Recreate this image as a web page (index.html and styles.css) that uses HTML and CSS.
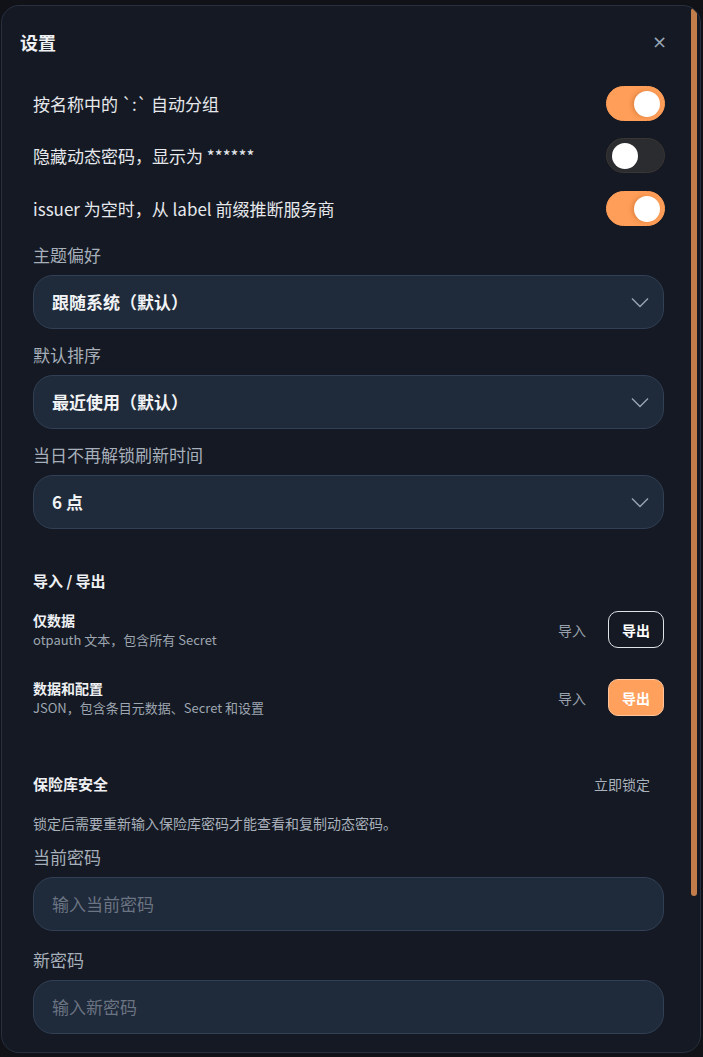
FILE: index.html
```html
<!DOCTYPE html>
<html lang="zh-CN">
<head>
    <meta charset="UTF-8">
    <meta name="viewport" content="width=device-width, initial-scale=1.0">
    <title>设置</title>
    <link rel="stylesheet" href="styles.css">
</head>
<body>
    <div class="dialog">
        <div class="dialog-header">
            <h1>设置</h1>
            <button type="button" class="close-btn">×</button>
        </div>

        <div class="dialog-body">
            <div class="toggle-row">
                <span>按名称中的 `:` 自动分组</span>
                <label class="switch on"><input type="checkbox" checked><span class="knob"></span></label>
            </div>
            <div class="toggle-row">
                <span>隐藏动态密码，显示为 ******</span>
                <label class="switch"><input type="checkbox"><span class="knob"></span></label>
            </div>
            <div class="toggle-row">
                <span>issuer 为空时，从 label 前缀推断服务商</span>
                <label class="switch on"><input type="checkbox" checked><span class="knob"></span></label>
            </div>

            <div class="field first">
                <label>主题偏好</label>
                <div class="select">
                    <span>跟随系统（默认）</span>
                    <svg width="18" height="11" viewBox="0 0 18 11"><path d="M1 1.5 L9 9.5 L17 1.5" fill="none" stroke="#9aa5b4" stroke-width="1.4"/></svg>
                </div>
            </div>
            <div class="field">
                <label>默认排序</label>
                <div class="select">
                    <span>最近使用（默认）</span>
                    <svg width="18" height="11" viewBox="0 0 18 11"><path d="M1 1.5 L9 9.5 L17 1.5" fill="none" stroke="#9aa5b4" stroke-width="1.4"/></svg>
                </div>
            </div>
            <div class="field">
                <label>当日不再解锁刷新时间</label>
                <div class="select">
                    <span>6 点</span>
                    <svg width="18" height="11" viewBox="0 0 18 11"><path d="M1 1.5 L9 9.5 L17 1.5" fill="none" stroke="#9aa5b4" stroke-width="1.4"/></svg>
                </div>
            </div>

            <h2 class="section-title io-title">导入 / 导出</h2>
            <div class="io-row">
                <div class="io-text">
                    <strong>仅数据</strong>
                    <span>otpauth 文本，包含所有 Secret</span>
                </div>
                <div class="io-actions">
                    <button type="button" class="link-btn">导入</button>
                    <button type="button" class="btn-outline">导出</button>
                </div>
            </div>
            <div class="io-row">
                <div class="io-text">
                    <strong>数据和配置</strong>
                    <span>JSON，包含条目元数据、Secret 和设置</span>
                </div>
                <div class="io-actions">
                    <button type="button" class="link-btn">导入</button>
                    <button type="button" class="btn-primary">导出</button>
                </div>
            </div>

            <div class="vault-head">
                <h2 class="section-title">保险库安全</h2>
                <button type="button" class="link-btn lock-btn">立即锁定</button>
            </div>
            <p class="vault-desc">锁定后需要重新输入保险库密码才能查看和复制动态密码。</p>

            <div class="field pw pw-first">
                <label for="cur">当前密码</label>
                <input type="password" id="cur" placeholder="输入当前密码">
            </div>
            <div class="field pw">
                <label for="new">新密码</label>
                <input type="password" id="new" placeholder="输入新密码">
            </div>
        </div>

        <div class="scroll-thumb"></div>
    </div>
</body>
</html>
```

FILE: styles.css
```css
* {
    box-sizing: border-box;
}
body {
    margin: 0;
    height: 1057px;
    background-color: #101217;
    font-family: "Noto Sans CJK SC", "Noto Sans", sans-serif;
    color: #e6e8ec;
    overflow: hidden;
}
.dialog {
    position: relative;
    margin: 5px 2px 0 1px;
    height: 1048px;
    background-color: #141923;
    border: 1px solid #283040;
    border-radius: 18px;
    overflow: hidden;
}
.dialog-header {
    display: flex;
    justify-content: space-between;
    align-items: center;
    padding: 22px 33px 21px 18px;
}
h1 {
    margin: 0;
    font-size: 18px;
    line-height: 28px;
    font-weight: 700;
    color: #eef0f3;
}
.close-btn {
    background: none;
    border: none;
    padding: 0;
    font-family: "DejaVu Sans", sans-serif;
    font-size: 18px;
    line-height: 20px;
    color: #9aa6b4;
    cursor: pointer;
}
.dialog-body {
    padding: 0 36px 0 31px;
}

/* 开关 */
.toggle-row {
    display: flex;
    justify-content: space-between;
    align-items: center;
    height: 52.5px;
    font-size: 17px;
    color: #e6e8ec;
}
.switch {
    position: relative;
    width: 59px;
    height: 35px;
    border-radius: 18px;
    background-color: #2a2c30;
    border: 1px solid #3a3633;
    flex-shrink: 0;
    margin-right: -1px;
}
.switch input {
    display: none;
}
.switch .knob {
    position: absolute;
    top: 4px;
    left: 5px;
    width: 26px;
    height: 26px;
    border-radius: 50%;
    background-color: #ffffff;
}
.switch.on {
    background-color: #ff9e58;
    border-color: #ff9e58;
}
.switch.on .knob {
    left: auto;
    right: 4px;
    box-shadow: -2px 0 4px rgba(160, 80, 20, 0.35);
}

/* 下拉框 */
.field {
    margin-top: 14px;
}
.field.first {
    margin-top: 8px;
}
.field label {
    display: block;
    font-size: 17px;
    line-height: 24px;
    color: #a7afba;
    margin-bottom: 8px;
}
.select {
    display: flex;
    justify-content: space-between;
    align-items: center;
    height: 54px;
    padding: 0 14px 0 18px;
    background-color: #1f2a3a;
    border: 1px solid #324055;
    border-radius: 20px;
    font-size: 17px;
    font-weight: 700;
    color: #f1f3f5;
}
.select svg {
    margin-top: 2px;
}

/* 导入导出 */
.section-title {
    margin: 0;
    font-size: 15px;
    line-height: 22px;
    font-weight: 700;
    color: #eef0f3;
}
.io-title {
    margin-top: 41px;
    margin-bottom: 18px;
}
.io-row {
    display: flex;
    justify-content: space-between;
    align-items: center;
    height: 40px;
    margin-bottom: 28px;
}
.io-text {
    display: flex;
    flex-direction: column;
}
.io-text strong {
    font-size: 14px;
    line-height: 20px;
    color: #eef0f3;
}
.io-text span {
    font-size: 13px;
    line-height: 20px;
    color: #9ea6b1;
}
.io-actions {
    display: flex;
    align-items: center;
    gap: 10px;
}
.link-btn {
    background: none;
    border: none;
    padding: 0 12px;
    font-family: inherit;
    font-size: 14px;
    line-height: 20px;
    color: #98a1ac;
    cursor: pointer;
}
.btn-outline,
.btn-primary {
    width: 56px;
    height: 37px;
    border-radius: 10px;
    font-family: inherit;
    font-size: 14px;
    font-weight: 700;
    color: #ffffff;
    cursor: pointer;
}
.btn-outline {
    background: transparent;
    border: 1px solid #dfe3e8;
}
.btn-primary {
    background-color: #ffa05c;
    border: 1px solid #ffc49a;
}

/* 保险库安全 */
.vault-head {
    display: flex;
    justify-content: space-between;
    align-items: center;
    margin-top: 55px;
}
.lock-btn {
    padding: 0 14px;
    color: #aab2bc;
}
.vault-desc {
    margin: 18px 0 0;
    font-size: 14px;
    line-height: 20px;
    color: #a9b0ba;
}
.field.pw {
    margin-top: 17px;
}
.field.pw-first {
    margin-top: 12px;
}
.field input {
    display: block;
    width: 100%;
    height: 54px;
    padding: 0 18px;
    background-color: #1f2a3a;
    border: 1px solid #324055;
    border-radius: 20px;
    font-family: inherit;
    font-size: 17px;
    color: #f1f3f5;
    outline: none;
}
.field input::placeholder {
    color: #6b7482;
}

/* 滚动条 */
.scroll-thumb {
    position: absolute;
    top: 2px;
    right: 3px;
    width: 6px;
    height: 888px;
    border-radius: 3px;
    background-color: #c27d4a;
}
```
